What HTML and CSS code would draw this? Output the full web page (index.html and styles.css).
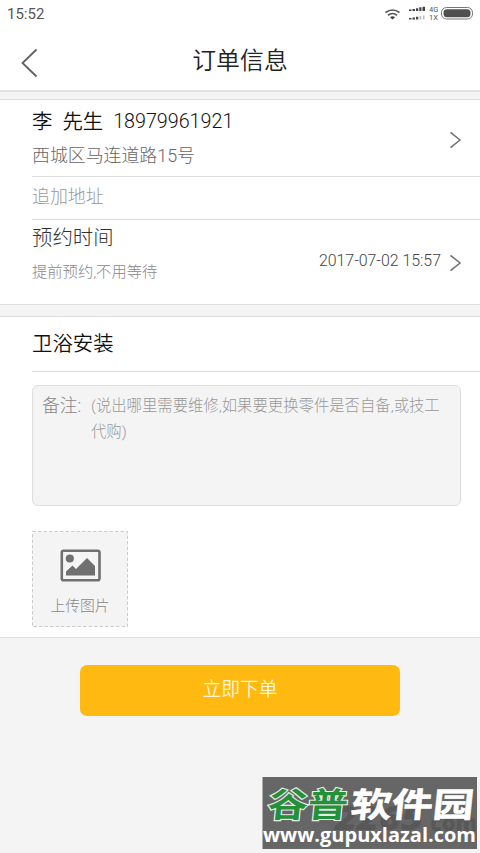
FILE: index.html
```
<!DOCTYPE html>
<html lang="zh-CN">
<head>
<meta charset="utf-8">
<title>订单信息</title>
<link rel="stylesheet" href="styles.css">
</head>
<body>
<div class="status">
  <span class="clock">15:52</span>
  <svg class="status-icons" width="101" height="28" viewBox="0 0 101 28">
    <g fill="none" stroke="#555" stroke-width="1.7">
      <path d="M6.500 12.500Q13.500 7.500 20.500 12.500"/>
      <path d="M9 15.200Q13.500 11.800 18 15.200"/>
    </g>
    <path d="M11 17.300Q13.500 15.400 16 17.300L13.500 19.600Z" fill="#444"/>
    <g fill="#444">
      <path d="M30 9.500h2.500v1.500h-2.500zM33.500 9h2.500v2h-2.500zM37 8.300h2.300v2.700h-2.300zM40.300 7.300h2.200v3.700h-2.200zM43.500 6.800h2.500v4.200h-2.500z"/>
      <path d="M30 18h2.500v1.500h-2.500zM33.500 17.500h2.500v2h-2.500zM37 16.800h2.300v2.700h-2.300z"/>
      <path d="M40.500 16h1.700v3.500h-1.700zM44 15.500h1.500v4h-1.500z" fill="#bbb"/>
    </g>
    <text class="net" x="50" y="11.500">4G</text>
    <text class="net" x="50" y="20">1X</text>
    <rect x="62.500" y="7.500" width="31" height="11.500" rx="5" fill="#fff" stroke="#777" stroke-width="1"/>
    <rect x="64.500" y="9.300" width="27" height="8" rx="3.500" fill="#505050"/>
  </svg>
</div>
<header class="header">
  <svg class="back" width="20" height="30" viewBox="0 0 20 30"><path d="M16.500 1.500L2.500 15L16.500 28.500"/></svg>
  <h1 class="title">订单信息</h1>
</header>
<main>
  <section class="card contact">
    <div class="row address">
      <div class="info">
        <div class="person"><span class="surname">李</span><span class="honorific">先生</span><span class="phone">18979961921</span></div>
        <div class="street">西城区马连道路15号</div>
      </div>
      <svg class="chevron" width="13" height="18" viewBox="0 0 13 18"><path d="M1.500 1.300L11 9L1.500 16.700"/></svg>
    </div>
    <div class="row extra">追加地址</div>
    <div class="row schedule">
      <div class="info">
        <div class="label">预约时间</div>
        <div class="hint">提前预约,不用等待</div>
      </div>
      <span class="date">2017-07-02 15:57</span>
      <svg class="chevron" width="13" height="18" viewBox="0 0 13 18"><path d="M1.500 1.300L11 9L1.500 16.700"/></svg>
    </div>
  </section>
  <section class="card service">
    <h2 class="row service-name">卫浴安装</h2>
    <div class="note">
      <span class="note-label">备注:</span>
      <p class="note-text">(说出哪里需要维修,如果要更换零件是否自备,或技工<br>代购)</p>
    </div>
    <div class="upload">
      <svg width="96" height="96" viewBox="0 0 96 96">
        <rect x="0.500" y="0.500" width="95" height="95" fill="#f4f4f4" stroke="#ccc" stroke-dasharray="3.500 2"/>
        <rect x="29.800" y="19.800" width="37.700" height="29.400" rx="1.800" fill="#f5f5f5" stroke="#707070" stroke-width="2.600"/>
        <circle cx="37.800" cy="27.500" r="4.100" fill="#707070"/>
        <path d="M34 44.500V40.500L40.500 34.500L44 38L55 27L63 35V44.500Z" fill="#707070"/>
      </svg>
      <span class="upload-label">上传图片</span>
    </div>
  </section>
  <button class="submit">立即下单</button>
</main>
<div class="watermark">
  <svg width="218" height="73" viewBox="0 0 218 73">
    <rect x="0.500" width="214.500" height="72" fill="#666"/>
    <text class="ghost" x="73" y="53" textLength="88" lengthAdjust="spacingAndGlyphs">2265</text>
    <text class="ghost small" x="168" y="54" textLength="47" lengthAdjust="spacingAndGlyphs">com</text>
    <g transform="skewX(-6)">
      <text class="brand green" x="9" y="40" textLength="80" lengthAdjust="spacingAndGlyphs">谷普</text>
      <text class="brand" x="92" y="40" textLength="123" lengthAdjust="spacingAndGlyphs">软件园</text>
    </g>
    <text class="site" x="1" y="65" textLength="213" lengthAdjust="spacingAndGlyphs">www.gupuxlazal.com</text>
  </svg>
</div>
</body>
</html>
```

FILE: styles.css
```
* { box-sizing: border-box; }
body {
  margin: 0;
  width: 480px;
  height: 853px;
  overflow: hidden;
  background: #f4f4f4;
  font-family: Roboto, "Noto Sans CJK SC", sans-serif;
  font-weight: 300;
  color: #222;
}
h1, h2, p { margin: 0; font-weight: 300; }
.status {
  height: 28px;
  background: #fff;
  display: flex;
  justify-content: space-between;
  padding-left: 7px;
}
.clock { font-size: 15px; line-height: 28px; font-weight: 400; color: #555; }
.status-icons { flex: none; }
.net { font-size: 7.5px; font-weight: 400; fill: #555; }
.header {
  height: 64px;
  background: #fff;
  border-bottom: 2px solid #e2e2e2;
  display: grid;
  grid-template-columns: 60px 1fr 60px;
}
.back { margin: 20px 0 0 20px; fill: none; stroke: #606060; stroke-width: 1.8; }
.title { text-align: center; font-size: 23.9px; line-height: 66px; height: 62px; font-weight: 350; }
.card { background: #fff; border-top: 1px solid #dedede; border-bottom: 1px solid #dedede; }
.contact { margin-top: 7px; height: 206px; }
.row { margin-left: 32px; border-bottom: 1px solid #dedede; }
.info { flex: 1; }
.chevron { fill: none; stroke: #707070; stroke-width: 1.5; flex: none; }
.address { display: flex; align-items: flex-start; height: 77px; padding-right: 18px; }
.address .chevron { margin-top: 31px; }
.person { display: flex; align-items: center; height: 30px; margin-top: 7px; font-size: 20.4px; line-height: 30px; color: #111; }
.surname { margin-right: 10px; }
.surname, .honorific { font-weight: 350; }
.phone { margin-left: 10px; font-size: 19.7px; }
.street { margin-top: 5px; font-size: 17.9px; line-height: 28px; color: #666; }
.extra { height: 43px; font-size: 17.9px; line-height: 39px; color: #999; }
.schedule { display: flex; border-bottom: 0; height: 84px; padding-right: 18px; }
.label { margin-top: 3px; font-size: 20.4px; line-height: 30px; color: #333; }
.hint { margin-top: 7px; font-size: 15.3px; line-height: 24px; color: #888; }
.date { margin: 29px 8px 0 0; font-size: 15.9px; line-height: 24px; color: #444; }
.schedule .chevron { margin-top: 34px; }
.service { margin-top: 11px; height: 322px; }
.service-name { height: 55px; font-size: 20.4px; line-height: 55px; color: #111; font-weight: 350; }
.note {
  display: flex;
  width: 429px;
  height: 121px;
  margin: 13px 0 0 32px;
  padding: 7px 0 0 9px;
  background: #f4f4f4;
  border: 1px solid #dedede;
  border-radius: 6px;
  color: #999;
}
.note-label { width: 49px; font-size: 17.8px; line-height: 26px; color: #888; }
.note-text { font-size: 15.37px; line-height: 26px; white-space: nowrap; }
.upload { display: grid; width: 96px; height: 96px; margin: 25px 0 0 32px; }
.upload > * { grid-area: 1 / 1; }
.upload-label { align-self: end; text-align: center; font-size: 14.8px; line-height: 20px; padding-bottom: 11px; color: #888; }
.submit {
  display: block;
  width: 320px;
  height: 51px;
  margin: 27px 0 0 80px;
  padding: 0 0 1px;
  border: 0;
  border-radius: 7px;
  background: #ffb911;
  color: #fff8d8;
  font: 350 18.8px/50px Roboto, "Noto Sans CJK SC", sans-serif;
}
.watermark { position: absolute; left: 262px; top: 777px; }
.watermark svg { display: block; overflow: visible; }
.brand { font-family: "Noto Sans CJK SC", sans-serif; font-size: 34px; font-weight: 700; fill: #fff; stroke: #fff; stroke-width: 0.5; }
.green { fill: #25903a; stroke: #e3efe3; stroke-width: 2.2; paint-order: stroke; }
.site { font-family: "Open Sans", sans-serif; font-size: 19.5px; font-weight: 700; fill: #fff; }
.ghost { font-family: "Open Sans", sans-serif; font-size: 34px; font-weight: 800; font-style: italic; fill: #505050; opacity: 0.6; }
.small { font-size: 22px; font-style: normal; }
```
